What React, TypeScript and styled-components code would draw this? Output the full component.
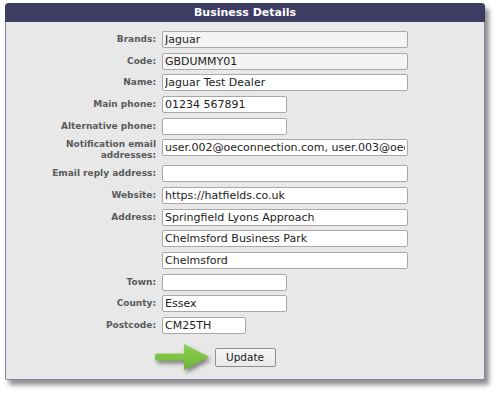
import React from "react";
import styled, { createGlobalStyle } from "styled-components";

const GlobalStyle = createGlobalStyle`
  body {
    margin: 0;
    background: #ffffff;
    font-family: "DejaVu Sans", Verdana, sans-serif;
  }
`;

//外层留白
const Page = styled.div`
  padding: 3px 0 0 5px;
  width: 498px;
  height: 397px;
  box-sizing: border-box;
`;

//面板
const Panel = styled.div`
  width: 480px;
  box-sizing: border-box;
  background: #e8e8e8;
  border: 1px solid #8584a8;
  border-top: none;
  border-radius: 4px 4px 2px 2px;
  box-shadow: 4px 5px 5px rgba(0, 0, 0, 0.45);
`;

const Header = styled.div`
  height: 19px;
  margin: 0 -1px;
  background: #3d3c62;
  border-radius: 4px 4px 0 0;
  color: #ffffff;
  font-weight: bold;
  font-size: 11px;
  line-height: 19px;
  text-align: center;
`;

const Body = styled.div`
  padding: 9px 0 12px 0;
`;

const Form = styled.div`
  display: grid;
  grid-template-columns: 150px 1fr;
  column-gap: 6px;
  row-gap: 4.67px;
`;

const Label = styled.div`
  align-self: center;
  text-align: right;
  font-size: 9px;
  font-weight: bold;
  line-height: 10.67px;
  color: #5a5a5a;
`;

const Field = styled.input<{ $size: "long" | "short" | "tiny"; $muted?: boolean }>`
  align-self: start;
  display: block;
  box-sizing: border-box;
  height: 17px;
  width: ${(p) => (p.$size === "long" ? "246px" : p.$size === "short" ? "125px" : "84px")};
  margin: 0;
  padding: 0 2px;
  border: 1px solid #a8a8a8;
  border-radius: 2px;
  background: ${(p) => (p.$muted ? "#f4f4f4" : "#ffffff")};
  font-family: "DejaVu Sans", Verdana, sans-serif;
  font-size: 11px;
  color: #222222;
  outline: none;
`;

const Actions = styled.div`
  display: flex;
  justify-content: center;
  margin-top: 14px;
`;

const ButtonWrap = styled.div`
  position: relative;
`;

const Button = styled.button`
  display: block;
  width: 61px;
  height: 19px;
  padding: 0;
  border: 1px solid #8e8e8e;
  border-radius: 2px;
  background: linear-gradient(#f6f6f6, #e9e9e9);
  font-family: "DejaVu Sans", Verdana, sans-serif;
  font-size: 10.5px;
  color: #222222;
`;

//绿色箭头标注
const Arrow = styled.svg`
  position: absolute;
  left: -60px;
  top: -6px;
  filter: drop-shadow(2px 3px 2px rgba(0, 0, 0, 0.45));
`;

type Row = {
  label: React.ReactNode;
  value: string;
  size: "long" | "short" | "tiny";
  muted?: boolean;
};

const rows: Row[] = [
  { label: "Brands:", value: "Jaguar", size: "long", muted: true },
  { label: "Code:", value: "GBDUMMY01", size: "long", muted: true },
  { label: "Name:", value: "Jaguar Test Dealer", size: "long" },
  { label: "Main phone:", value: "01234 567891", size: "short" },
  { label: "Alternative phone:", value: "", size: "short" },
  {
    label: (
      <>
        Notification email
        <br />
        addresses:
      </>
    ),
    value: "user.002@oeconnection.com, user.003@oeconnection.com",
    size: "long",
  },
  { label: "Email reply address:", value: "", size: "long" },
  { label: "Website:", value: "https://hatfields.co.uk", size: "long" },
  { label: "Address:", value: "Springfield Lyons Approach", size: "long" },
  { label: "", value: "Chelmsford Business Park", size: "long" },
  { label: "", value: "Chelmsford", size: "long" },
  { label: "Town:", value: "", size: "short" },
  { label: "County:", value: "Essex", size: "short" },
  { label: "Postcode:", value: "CM25TH", size: "tiny" },
];

function App() {
  return (
    <Page>
      <GlobalStyle />
      <Panel>
        <Header>Business Details</Header>
        <Body>
          <Form>
            {rows.map((r, i) => (
              <React.Fragment key={i}>
                <Label>{r.label}</Label>
                <Field
                  $size={r.size}
                  $muted={r.muted}
                  defaultValue={r.value}
                  readOnly={r.muted}
                />
              </React.Fragment>
            ))}
          </Form>
          <Actions>
            <ButtonWrap>
              <Arrow width="56" height="30" viewBox="0 0 56 30">
                <defs>
                  <linearGradient id="arrowFill" x1="0" y1="0" x2="0" y2="1">
                    <stop offset="0" stopColor="#8fd14f" />
                    <stop offset="1" stopColor="#6cb333" />
                  </linearGradient>
                </defs>
                <path
                  d="M3 11.5 H29 V2 L54 15 L29 28 V18.5 H3 A3.5 3.5 0 0 1 3 11.5 Z"
                  fill="url(#arrowFill)"
                />
              </Arrow>
              <Button>Update</Button>
            </ButtonWrap>
          </Actions>
        </Body>
      </Panel>
    </Page>
  );
}

export default App;
